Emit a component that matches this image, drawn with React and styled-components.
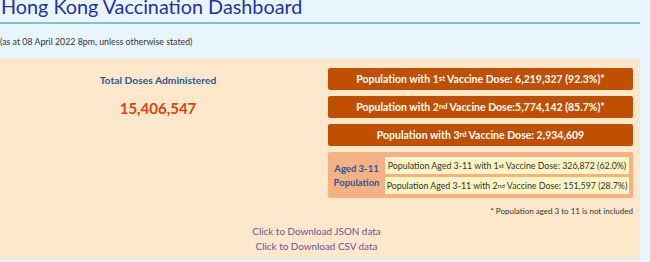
import React from "react";
import styled, { createGlobalStyle } from "styled-components";

const GlobalStyle = createGlobalStyle`
  html, body {
    margin: 0;
    padding: 0;
    background: #e9f5fc;
    font-family: "Lato", "Open Sans", sans-serif;
    overflow: hidden;
  }
`;

const Page = styled.div`
  width: 640px;
`;

const Title = styled.h1`
  margin: -6px 0 0 1px;
  font-size: 19.8px;
  font-weight: 400;
  line-height: 24px;
  color: #2133a0;
  white-space: nowrap;
`;

const Rule = styled.hr`
  margin: 4px 0 0;
  border: 0;
  height: 2px;
  background: #86c3c0;
`;

const Stated = styled.p`
  margin: 0;
  padding: 11px 0 10px;
  font-size: 8.8px;
  line-height: 14px;
  color: #333;
`;

const Panel = styled.section`
  background: #fee8cc;
  padding: 9px 7px 0 0;
  height: 200px;
  box-sizing: border-box;
`;

const Columns = styled.div`
  display: grid;
  grid-template-columns: 1fr 305px;
  column-gap: 12px;
`;

const Totals = styled.div`
  display: flex;
  flex-direction: column;
  align-items: center;
  padding-top: 4.5px;
`;

const TotalLabel = styled.div`
  font-size: 10.3px;
  font-weight: 700;
  color: #2b5797;
  line-height: 15px;
`;

const TotalNumber = styled.div`
  margin-top: 10.5px;
  font-size: 15px;
  font-weight: 700;
  color: #d9430f;
  line-height: 20px;
`;

const Stack = styled.div`
  display: flex;
  flex-direction: column;
  gap: 6px;
`;

const DoseBar = styled.div`
  height: 22px;
  background: #c04f00;
  border-radius: 2px;
  color: #fff;
  font-weight: 700;
  font-size: 10.5px;
  display: flex;
  align-items: center;
  justify-content: center;
  white-space: nowrap;

  sup {
    font-size: 7.5px;
    line-height: 0;
    vertical-align: 4px;
  }
`;

const AgedBox = styled.div`
  background: #f5b183;
  border-radius: 2px;
  display: flex;
  align-items: center;
  padding: 5px 4px 4px;
  gap: 4px;
`;

const AgedLabel = styled.div`
  flex: 0 0 49px;
  text-align: center;
  font-size: 9.5px;
  font-weight: 700;
  color: #2b5797;
  line-height: 14px;
  white-space: nowrap;
`;

const AgedList = styled.div`
  flex: 1;
  display: flex;
  flex-direction: column;
  gap: 3px;
`;

const AgedRow = styled.div`
  height: 17px;
  background: #fdf4c4;
  font-size: 8.8px;
  color: #333;
  display: flex;
  align-items: center;
  justify-content: center;
  white-space: nowrap;

  sup {
    font-size: 6.5px;
    line-height: 0;
    vertical-align: 3.5px;
  }
`;

const Footnote = styled.div`
  margin-top: 7px;
  text-align: right;
  font-size: 8px;
  color: #333;
  line-height: 12px;
`;

const Links = styled.div`
  margin-top: 7px;
  display: flex;
  flex-direction: column;
  align-items: center;
`;

const DataLink = styled.a`
  font-size: 9.9px;
  line-height: 15px;
  color: #6e4f9a;
  text-decoration: none;
`;

export default function App() {
  return (
    <Page>
      <GlobalStyle />
      <Title>Hong Kong Vaccination Dashboard</Title>
      <Rule />
      <Stated>(as at 08 April 2022 8pm, unless otherwise stated)</Stated>
      <Panel>
        <Columns>
          <Totals>
            <TotalLabel>Total Doses Administered</TotalLabel>
            <TotalNumber>15,406,547</TotalNumber>
          </Totals>
          <div>
            <Stack>
              <DoseBar>
                Population with 1<sup>st</sup>&nbsp;Vaccine Dose: 6,219,327 (92.3%)*
              </DoseBar>
              <DoseBar>
                Population with 2<sup>nd</sup>&nbsp;Vaccine Dose:5,774,142 (85.7%)*
              </DoseBar>
              <DoseBar>
                Population with 3<sup>rd</sup>&nbsp;Vaccine Dose: 2,934,609
              </DoseBar>
              <AgedBox>
                <AgedLabel>
                  Aged 3-11
                  <br />
                  Population
                </AgedLabel>
                <AgedList>
                  <AgedRow>
                    Population Aged 3-11 with 1<sup>st</sup>&nbsp;Vaccine Dose: 326,872 (62.0%)
                  </AgedRow>
                  <AgedRow>
                    Population Aged 3-11 with 2<sup>nd</sup>&nbsp;Vaccine Dose: 151,597 (28.7%)
                  </AgedRow>
                </AgedList>
              </AgedBox>
            </Stack>
            <Footnote>* Population aged 3 to 11 is not included</Footnote>
          </div>
        </Columns>
        <Links>
          <DataLink href="#json">Click to Download JSON data</DataLink>
          <DataLink href="#csv">Click to Download CSV data</DataLink>
        </Links>
      </Panel>
    </Page>
  );
}
